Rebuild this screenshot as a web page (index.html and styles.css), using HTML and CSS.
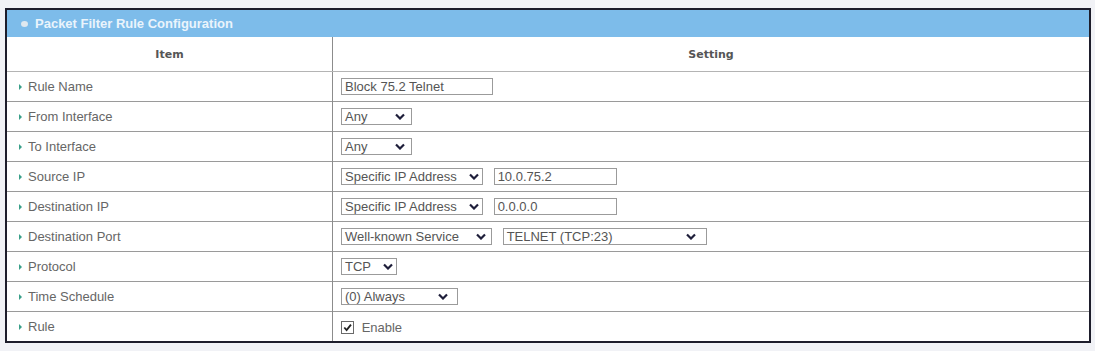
FILE: index.html
```html
<!DOCTYPE html>
<html lang="en">

<head>
    <meta charset="UTF-8">
    <title>Packet Filter Rule Configuration</title>
    <link rel="stylesheet" href="styles.css">
</head>

<body>

    <div class="panel">
        <div class="panel-title">
            <span class="title-dot"></span>
            Packet Filter Rule Configuration
        </div>

        <table class="config-table">
            <tr class="head-row">
                <th class="item-col">Item</th>
                <th>Setting</th>
            </tr>
            <tr>
                <td class="label">Rule Name</td>
                <td><span class="text-box w-name">Block 75.2 Telnet</span></td>
            </tr>
            <tr>
                <td class="label">From Interface</td>
                <td><span class="sel w-any">Any<svg class="chev" viewBox="0 0 10 7"><path d="M1 1.5 L5 5.5 L9 1.5"/></svg></span></td>
            </tr>
            <tr>
                <td class="label">To Interface</td>
                <td><span class="sel w-any">Any<svg class="chev" viewBox="0 0 10 7"><path d="M1 1.5 L5 5.5 L9 1.5"/></svg></span></td>
            </tr>
            <tr>
                <td class="label">Source IP</td>
                <td>
                    <span class="sel w-ip">Specific IP Address<svg class="chev" viewBox="0 0 10 7"><path d="M1 1.5 L5 5.5 L9 1.5"/></svg></span>
                    <span class="text-box w-addr">10.0.75.2</span>
                </td>
            </tr>
            <tr>
                <td class="label">Destination IP</td>
                <td>
                    <span class="sel w-ip">Specific IP Address<svg class="chev" viewBox="0 0 10 7"><path d="M1 1.5 L5 5.5 L9 1.5"/></svg></span>
                    <span class="text-box w-addr">0.0.0.0</span>
                </td>
            </tr>
            <tr>
                <td class="label">Destination Port</td>
                <td>
                    <span class="sel w-svc">Well-known Service<svg class="chev" viewBox="0 0 10 7"><path d="M1 1.5 L5 5.5 L9 1.5"/></svg></span>
                    <span class="sel w-telnet">TELNET (TCP:23)<svg class="chev" viewBox="0 0 10 7"><path d="M1 1.5 L5 5.5 L9 1.5"/></svg></span>
                </td>
            </tr>
            <tr>
                <td class="label">Protocol</td>
                <td><span class="sel w-tcp">TCP<svg class="chev" viewBox="0 0 10 7"><path d="M1 1.5 L5 5.5 L9 1.5"/></svg></span></td>
            </tr>
            <tr>
                <td class="label">Time Schedule</td>
                <td><span class="sel w-sched">(0) Always<svg class="chev" viewBox="0 0 10 7"><path d="M1 1.5 L5 5.5 L9 1.5"/></svg></span></td>
            </tr>
            <tr>
                <td class="label">Rule</td>
                <td>
                    <span class="check"><svg viewBox="0 0 12 12"><path d="M2.5 6 L5 8.8 L9.8 2.8"/></svg></span>
                    <span class="check-text">Enable</span>
                </td>
            </tr>
        </table>
    </div>

</body>

</html>
```

FILE: styles.css
```css
body {
    margin: 0;
    padding: 8px 4px 6px 5px;
    background-color: #f1f2f6;
    font-family: "Liberation Sans", Arial, sans-serif;
    font-size: 13px;
    color: #666;
}

.panel {
    border: 2px solid #1d1d2b;
    background-color: white;
}

.panel-title {
    display: flex;
    align-items: center;
    height: 27px;
    padding-left: 14px;
    background-color: #7dbcea;
    color: #eaf4fc;
    font-size: 13px;
    font-weight: bold;
}

.title-dot {
    display: inline-block;
    width: 7px;
    height: 6px;
    margin-right: 7px;
    border-radius: 50%;
    background-color: #dfe8ef;
}

.config-table {
    width: 100%;
    border-collapse: collapse;
}

.config-table th {
    height: 34px;
    padding: 0;
    font-family: "DejaVu Sans", Verdana, sans-serif;
    font-size: 11px;
    font-weight: bold;
    color: #555;
    border-bottom: 1px solid #b4b4b4;
}

.config-table td {
    height: 29px;
    padding: 0 0 0 8px;
    border-top: 1px solid #9a9a9a;
    white-space: nowrap;
}

.config-table .item-col {
    width: 325px;
    border-right: 1px solid #8c8c8c;
}

.config-table td.label {
    padding-left: 12px;
    border-right: 1px solid #8c8c8c;
}

.label::before {
    content: "";
    display: inline-block;
    margin-right: 6px;
    border-left: 3px solid #3aa08a;
    border-top: 3px solid transparent;
    border-bottom: 3px solid transparent;
    vertical-align: 1px;
}

.text-box,
.sel {
    display: inline-flex;
    align-items: center;
    box-sizing: border-box;
    height: 17px;
    padding: 0 3px;
    border: 1px solid #9b9b9b;
    background-color: white;
    color: #555;
    font-size: 13px;
    vertical-align: middle;
}

.sel {
    justify-content: space-between;
    gap: 4px;
}

.chev {
    flex-shrink: 0;
    width: 10px;
    height: 7px;
    fill: none;
    stroke: #1e1e3a;
    stroke-width: 2.2;
}

.w-name { width: 152px; }
.w-any { width: 71px; padding-right: 6px; }
.w-ip { width: 142px; }
.w-addr { width: 123px; margin-left: 7px; }
.w-svc { width: 151px; padding-right: 5px; }
.w-telnet { width: 204px; margin-left: 7px; padding-right: 10px; }
.w-tcp { width: 56px; }
.w-sched { width: 117px; padding-right: 9px; }

.check {
    display: inline-flex;
    align-items: center;
    justify-content: center;
    box-sizing: border-box;
    width: 13px;
    height: 13px;
    border: 1px solid #6a6a6a;
    vertical-align: middle;
}

.check svg {
    width: 11px;
    height: 11px;
    fill: none;
    stroke: #222;
    stroke-width: 2;
}

.check-text {
    margin-left: 4px;
    vertical-align: middle;
}
```
